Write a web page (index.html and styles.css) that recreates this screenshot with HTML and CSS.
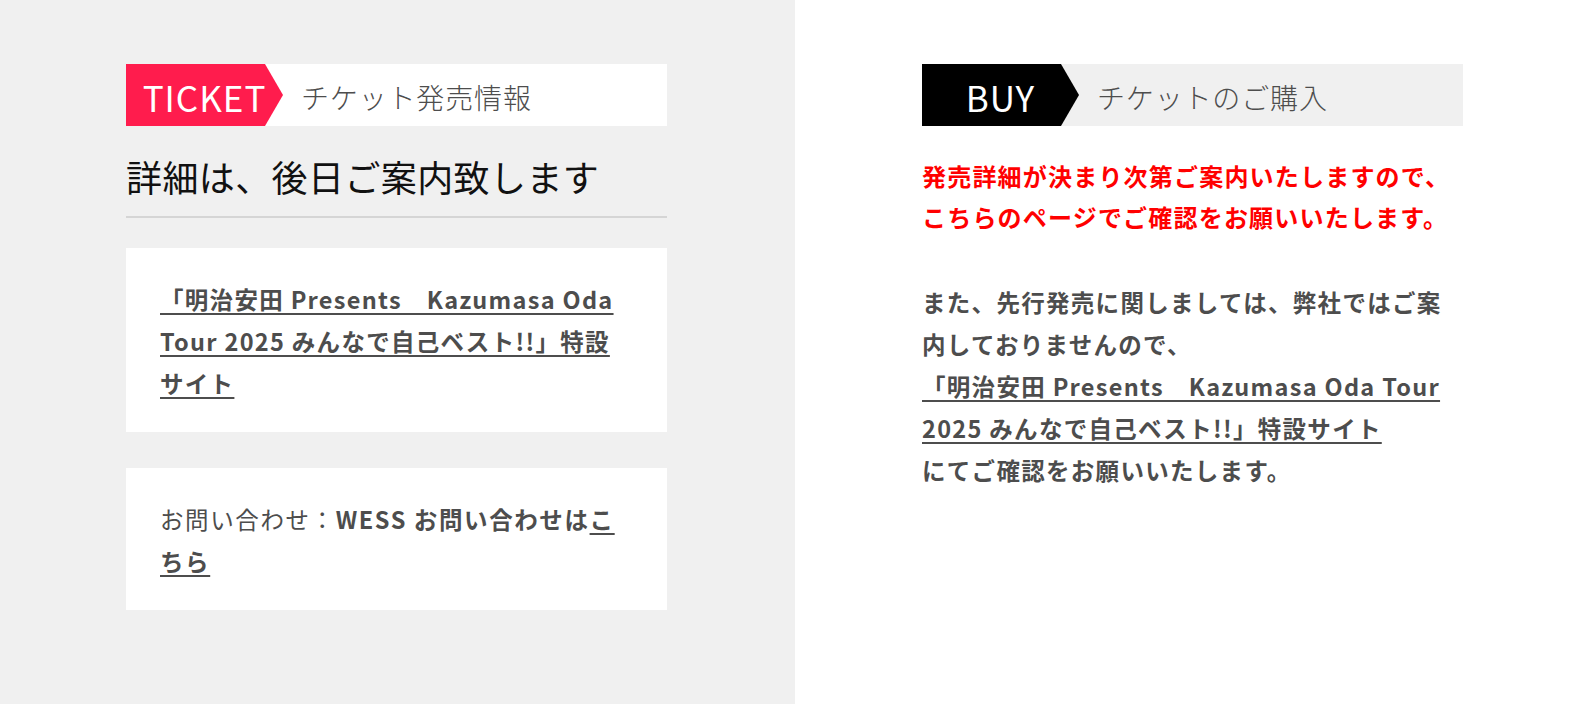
FILE: index.html
```html
<!DOCTYPE html>
<html lang="ja">
<head>
<meta charset="utf-8">
<title>Ticket</title>
<link rel="stylesheet" href="styles.css">
</head>
<body>
<div class="page">
  <section class="panel panel-left">
    <div class="col">
      <div class="head head-ticket">
        <div class="label label-red">TICKET</div>
        <div class="head-sub">チケット発売情報</div>
      </div>
      <h2 class="title">詳細は、後日ご案内致します</h2>
      <div class="card">
        <a class="link" href="#">「明治安田 Presents　Kazumasa Oda Tour 2025 みんなで自己ベスト!!」特設サイト</a>
      </div>
      <div class="card card-contact">
        <span class="normal">お問い合わせ：</span>WESS お問い合わせは<a class="link" href="#">こちら</a>
      </div>
    </div>
  </section>
  <section class="panel panel-right">
    <div class="col">
      <div class="head head-buy">
        <div class="label label-black">BUY</div>
        <div class="head-sub">チケットのご購入</div>
      </div>
      <p class="notice">発売詳細が決まり次第ご案内いたしますので、<br>こちらのページでご確認をお願いいたします。</p>
      <p class="body-text">また、先行発売に関しましては、弊社ではご案内しておりませんので、<br><a class="link" href="#">「明治安田 Presents　Kazumasa Oda Tour 2025 みんなで自己ベスト!!」特設サイト</a><br>にてご確認をお願いいたします。</p>
    </div>
  </section>
</div>
</body>
</html>
```

FILE: styles.css
```css
* { box-sizing: border-box; }
html, body {
  margin: 0;
  padding: 0;
}
body {
  font-family: "Noto Sans CJK JP", "Noto Sans", sans-serif;
  color: #4d4d4d;
  background: #ffffff;
}
.page {
  display: flex;
  width: 1594px;
  height: 704px;
}
.panel {
  height: 704px;
  padding-top: 64px;
}
.panel-left {
  width: 795px;
  flex: 0 0 795px;
  background: #f0f0f0;
  padding-left: 126px;
}
.panel-right {
  flex: 1;
  background: #ffffff;
  padding-left: 127px;
}
.col {
  width: 541px;
}
.head {
  display: flex;
  align-items: center;
  height: 62px;
}
.head-ticket { background: #ffffff; }
.head-buy { background: #f0f0f0; }
.label {
  width: 157px;
  height: 62px;
  flex: 0 0 157px;
  display: flex;
  align-items: center;
  justify-content: center;
  color: #ffffff;
  font-size: 35px;
  font-weight: 400;
  letter-spacing: 1px;
  line-height: 1;
  padding-top: 2px;
  clip-path: polygon(0 0, 139px 0, 157px 50%, 139px 100%, 0 100%);
}
.label-red { background: #ff1c4d; }
.label-black { background: #000000; }
.head-sub {
  margin-left: 18px;
  font-size: 28px;
  font-weight: 300;
  color: #4d4d4d;
  padding-top: 4px;
  letter-spacing: 0.03em;
}
.title {
  margin: 26px 0 0;
  padding-bottom: 16px;
  font-size: 36px;
  line-height: 48px;
  font-weight: 400;
  letter-spacing: 0.4px;
  color: #111111;
  border-bottom: 2px solid #d5d5d5;
}
.card {
  background: #ffffff;
  margin-top: 30px;
  padding: 30px 40px 28px 34px;
  font-size: 23.5px;
  letter-spacing: 1.3px;
  line-height: 42px;
  font-weight: 700;
  color: #4d4d4d;
}
.card-contact {
  margin-top: 36px;
  letter-spacing: 1.6px;
}
.normal {
  font-weight: 400;
}
.link {
  color: #4d4d4d;
  text-decoration: underline;
  text-decoration-thickness: 2px;
  text-underline-offset: 4px;
}
.notice {
  margin: 28.5px 0 0;
  font-size: 24px;
  letter-spacing: 1.2px;
  line-height: 41px;
  font-weight: 700;
  color: #ff0000;
}
.body-text {
  margin: 44.5px 0 0;
  font-size: 23.5px;
  letter-spacing: 1.3px;
  line-height: 42px;
  font-weight: 700;
  color: #4d4d4d;
}
```
